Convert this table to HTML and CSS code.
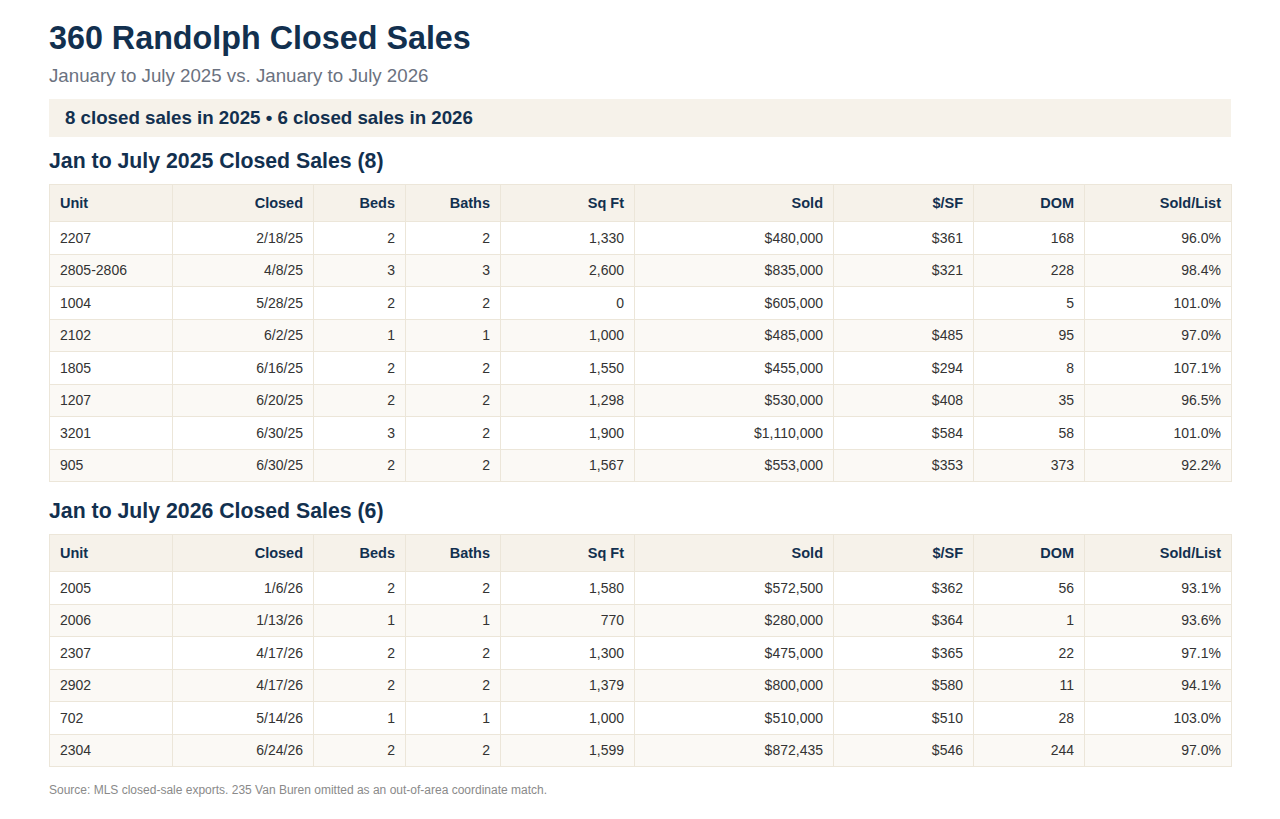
FILE: index.html
```html
<!DOCTYPE html>
<html lang="en">
<head>
<meta charset="utf-8">
<title>360 Randolph Closed Sales</title>
<link rel="stylesheet" href="styles.css">
</head>
<body>
<main class="page">
  <h1 class="title">360 Randolph Closed Sales</h1>
  <p class="subtitle">January to July 2025 vs. January to July 2026</p>
  <div class="summary">8 closed sales in 2025 • 6 closed sales in 2026</div>

  <section class="block">
    <h2 class="section-title">Jan to July 2025 Closed Sales (8)</h2>
    <table class="sales">
      <colgroup>
        <col class="c-unit"><col class="c-closed"><col class="c-beds"><col class="c-baths"><col class="c-sqft"><col class="c-sold"><col class="c-psf"><col class="c-dom"><col class="c-ratio">
      </colgroup>
      <thead>
        <tr><th class="left">Unit</th><th>Closed</th><th>Beds</th><th>Baths</th><th>Sq Ft</th><th>Sold</th><th>$/SF</th><th>DOM</th><th>Sold/List</th></tr>
      </thead>
      <tbody>
        <tr><td class="left">2207</td><td>2/18/25</td><td>2</td><td>2</td><td>1,330</td><td>$480,000</td><td>$361</td><td>168</td><td>96.0%</td></tr>
        <tr><td class="left">2805-2806</td><td>4/8/25</td><td>3</td><td>3</td><td>2,600</td><td>$835,000</td><td>$321</td><td>228</td><td>98.4%</td></tr>
        <tr><td class="left">1004</td><td>5/28/25</td><td>2</td><td>2</td><td>0</td><td>$605,000</td><td></td><td>5</td><td>101.0%</td></tr>
        <tr><td class="left">2102</td><td>6/2/25</td><td>1</td><td>1</td><td>1,000</td><td>$485,000</td><td>$485</td><td>95</td><td>97.0%</td></tr>
        <tr><td class="left">1805</td><td>6/16/25</td><td>2</td><td>2</td><td>1,550</td><td>$455,000</td><td>$294</td><td>8</td><td>107.1%</td></tr>
        <tr><td class="left">1207</td><td>6/20/25</td><td>2</td><td>2</td><td>1,298</td><td>$530,000</td><td>$408</td><td>35</td><td>96.5%</td></tr>
        <tr><td class="left">3201</td><td>6/30/25</td><td>3</td><td>2</td><td>1,900</td><td>$1,110,000</td><td>$584</td><td>58</td><td>101.0%</td></tr>
        <tr><td class="left">905</td><td>6/30/25</td><td>2</td><td>2</td><td>1,567</td><td>$553,000</td><td>$353</td><td>373</td><td>92.2%</td></tr>
      </tbody>
    </table>
  </section>

  <section class="block">
    <h2 class="section-title">Jan to July 2026 Closed Sales (6)</h2>
    <table class="sales">
      <colgroup>
        <col class="c-unit"><col class="c-closed"><col class="c-beds"><col class="c-baths"><col class="c-sqft"><col class="c-sold"><col class="c-psf"><col class="c-dom"><col class="c-ratio">
      </colgroup>
      <thead>
        <tr><th class="left">Unit</th><th>Closed</th><th>Beds</th><th>Baths</th><th>Sq Ft</th><th>Sold</th><th>$/SF</th><th>DOM</th><th>Sold/List</th></tr>
      </thead>
      <tbody>
        <tr><td class="left">2005</td><td>1/6/26</td><td>2</td><td>2</td><td>1,580</td><td>$572,500</td><td>$362</td><td>56</td><td>93.1%</td></tr>
        <tr><td class="left">2006</td><td>1/13/26</td><td>1</td><td>1</td><td>770</td><td>$280,000</td><td>$364</td><td>1</td><td>93.6%</td></tr>
        <tr><td class="left">2307</td><td>4/17/26</td><td>2</td><td>2</td><td>1,300</td><td>$475,000</td><td>$365</td><td>22</td><td>97.1%</td></tr>
        <tr><td class="left">2902</td><td>4/17/26</td><td>2</td><td>2</td><td>1,379</td><td>$800,000</td><td>$580</td><td>11</td><td>94.1%</td></tr>
        <tr><td class="left">702</td><td>5/14/26</td><td>1</td><td>1</td><td>1,000</td><td>$510,000</td><td>$510</td><td>28</td><td>103.0%</td></tr>
        <tr><td class="left">2304</td><td>6/24/26</td><td>2</td><td>2</td><td>1,599</td><td>$872,435</td><td>$546</td><td>244</td><td>97.0%</td></tr>
      </tbody>
    </table>
  </section>

  <p class="source">Source: MLS closed-sale exports. 235 Van Buren omitted as an out-of-area coordinate match.</p>
</main>
</body>
</html>
```

FILE: styles.css
```css
* { box-sizing: border-box; }

html, body {
  margin: 0;
  padding: 0;
  background: #ffffff;
}

body {
  font-family: "Liberation Sans", Arial, sans-serif;
  color: #333333;
}

.page {
  padding: 19px 49px 20px 49px;
}

.title {
  margin: 0;
  font-size: 32.3px;
  line-height: 38px;
  font-weight: 700;
  color: #12304f;
}

.subtitle {
  margin: 8px 0 0 0;
  font-size: 18.72px;
  line-height: 22px;
  color: #6b7280;
}

.summary {
  margin-top: 12px;
  background: #f6f2ea;
  padding: 8px 16px;
  font-size: 18.72px;
  line-height: 22px;
  font-weight: 700;
  color: #12304f;
}

.block {
  margin-top: 11px;
}

.block + .block {
  margin-top: 16px;
}

.section-title {
  margin: 0 0 10px 0;
  font-size: 21.28px;
  line-height: 26px;
  font-weight: 700;
  color: #12304f;
}

.sales {
  width: 100%;
  border-collapse: collapse;
  table-layout: fixed;
  font-size: 14px;
}

.c-unit { width: 123px; }
.c-closed { width: 141px; }
.c-beds { width: 92px; }
.c-baths { width: 95px; }
.c-sqft { width: 134px; }
.c-sold { width: 199px; }
.c-psf { width: 140px; }
.c-dom { width: 111px; }
.c-ratio { width: 147px; }

.sales th,
.sales td {
  border: 1px solid #ece6d9;
  padding: 0 10px;
  text-align: right;
  white-space: nowrap;
}

.sales th {
  background: #f6f2ea;
  color: #12304f;
  font-weight: 700;
  font-size: 14.5px;
  height: 37px;
}

.sales td {
  height: 32.5px;
  color: #333333;
}

.sales tbody tr:nth-child(even) td {
  background: #fbf9f5;
}

.sales .left {
  text-align: left;
}

.source {
  margin: 16px 0 0 0;
  font-size: 12px;
  line-height: 14px;
  color: #8a8a8a;
}
```
